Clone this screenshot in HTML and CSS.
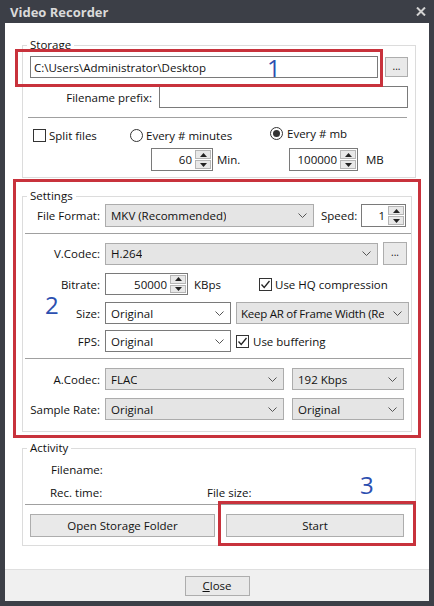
FILE: index.html
```html
<!DOCTYPE html>
<html>
<head>
<meta charset="utf-8">
<title>Video Recorder</title>
<link rel="stylesheet" href="styles.css">
</head>
<body>
<div class="window">
  <div class="titlebar">
    <span class="title">Video Recorder</span>
    <svg class="close-x" width="10" height="9" viewBox="0 0 10 9"><path d="M1 0.5 L9 8.5 M9 0.5 L1 8.5" stroke="#d2d2d2" stroke-width="2"/></svg>
  </div>
  <div class="client">
    <div class="content">
      <fieldset class="group g-storage">
        <legend>Storage</legend>
        <div class="gbody sbody">
          <div class="row r-path">
            <div class="input w348">C:\Users\Administrator\Desktop</div>
            <div class="btn dots w23">...</div>
          </div>
          <div class="row r-prefix">
            <span>Filename prefix:</span>
            <div class="input w249"></div>
          </div>
          <div class="sep s-storage"></div>
          <div class="row r-split">
            <span class="opt o1"><span class="chk"></span>Split files</span>
            <span class="opt o2"><span class="radio"></span>Every # minutes</span>
            <span class="opt o3"><span class="radio on"></span>Every # mb</span>
          </div>
          <div class="row r-spin">
            <span class="cell c-min">
              <span class="spin w62"><span class="sval">60</span><span class="sarr"><span class="sbtn"><svg width="7" height="4" viewBox="0 0 7 4"><path d="M0 4 L3.5 0 L7 4Z" fill="#222"/></svg></span><span class="sbtn"><svg width="7" height="4" viewBox="0 0 7 4"><path d="M0 0 L3.5 4 L7 0Z" fill="#222"/></svg></span></span></span>
              <span class="unit u-min">Min.</span>
            </span>
            <span class="cell">
              <span class="spin w69"><span class="sval">100000</span><span class="sarr"><span class="sbtn"><svg width="7" height="4" viewBox="0 0 7 4"><path d="M0 4 L3.5 0 L7 4Z" fill="#222"/></svg></span><span class="sbtn"><svg width="7" height="4" viewBox="0 0 7 4"><path d="M0 0 L3.5 4 L7 0Z" fill="#222"/></svg></span></span></span>
              <span class="unit u-mb">MB</span>
            </span>
          </div>
        </div>
      </fieldset>

      <fieldset class="group g-settings">
        <legend>Settings</legend>
        <div class="gbody setbody">
          <div class="row r-ff">
            <span class="lab">File Format:</span>
            <div class="combo gray w209 h23"><span class="ctext">MKV (Recommended)</span><svg class="chev" width="9" height="5" viewBox="0 0 9 5"><path d="M0.5 0.5 L4.5 4.5 L8.5 0.5" fill="none" stroke="#555" stroke-width="1"/></svg></div>
            <span class="speed-lbl">Speed:</span>
            <span class="spin w45 h23 speed"><span class="sval">1</span><span class="sarr"><span class="sbtn"><svg width="7" height="4" viewBox="0 0 7 4"><path d="M0 4 L3.5 0 L7 4Z" fill="#222"/></svg></span><span class="sbtn"><svg width="7" height="4" viewBox="0 0 7 4"><path d="M0 0 L3.5 4 L7 0Z" fill="#222"/></svg></span></span></span>
          </div>
          <div class="sep s-set1"></div>
          <div class="row r-vc">
            <span class="lab">V.Codec:</span>
            <div class="combo gray w273"><span class="ctext">H.264</span><svg class="chev" width="9" height="5" viewBox="0 0 9 5"><path d="M0.5 0.5 L4.5 4.5 L8.5 0.5" fill="none" stroke="#555" stroke-width="1"/></svg></div>
            <div class="btn dots w24 h23 ml5">...</div>
          </div>
          <div class="row r-br">
            <span class="lab">Bitrate:</span>
            <span class="cell c-br">
              <span class="spin w83 h22"><span class="sval">50000</span><span class="sarr"><span class="sbtn"><svg width="7" height="4" viewBox="0 0 7 4"><path d="M0 4 L3.5 0 L7 4Z" fill="#222"/></svg></span><span class="sbtn"><svg width="7" height="4" viewBox="0 0 7 4"><path d="M0 0 L3.5 4 L7 0Z" fill="#222"/></svg></span></span></span>
              <span class="unit u-kbps">KBps</span>
            </span>
            <span class="opt"><span class="chk on"><svg width="11" height="11" viewBox="0 0 11 11"><path d="M1.5 5.5 L4.2 8.5 L9.5 2" fill="none" stroke="#222" stroke-width="1.3"/></svg></span>Use HQ compression</span>
          </div>
          <div class="row r-size">
            <span class="lab">Size:</span>
            <div class="combo white w126"><span class="ctext">Original</span><svg class="chev" width="9" height="5" viewBox="0 0 9 5"><path d="M0.5 0.5 L4.5 4.5 L8.5 0.5" fill="none" stroke="#555" stroke-width="1"/></svg></div>
            <div class="combo gray w173 ml5 tight"><span class="ctext">Keep AR of Frame Width (Re</span><svg class="chev" width="9" height="5" viewBox="0 0 9 5"><path d="M0.5 0.5 L4.5 4.5 L8.5 0.5" fill="none" stroke="#555" stroke-width="1"/></svg></div>
          </div>
          <div class="row r-fps">
            <span class="lab">FPS:</span>
            <div class="combo white w126"><span class="ctext">Original</span><svg class="chev" width="9" height="5" viewBox="0 0 9 5"><path d="M0.5 0.5 L4.5 4.5 L8.5 0.5" fill="none" stroke="#555" stroke-width="1"/></svg></div>
            <span class="opt ml5"><span class="chk on"><svg width="11" height="11" viewBox="0 0 11 11"><path d="M1.5 5.5 L4.2 8.5 L9.5 2" fill="none" stroke="#222" stroke-width="1.3"/></svg></span>Use buffering</span>
          </div>
          <div class="sep s-set2"></div>
          <div class="row r-ac">
            <span class="lab">A.Codec:</span>
            <div class="combo gray w179"><span class="ctext">FLAC</span><svg class="chev" width="9" height="5" viewBox="0 0 9 5"><path d="M0.5 0.5 L4.5 4.5 L8.5 0.5" fill="none" stroke="#555" stroke-width="1"/></svg></div>
            <div class="combo gray w112 ml8"><span class="ctext">192 Kbps</span><svg class="chev" width="9" height="5" viewBox="0 0 9 5"><path d="M0.5 0.5 L4.5 4.5 L8.5 0.5" fill="none" stroke="#555" stroke-width="1"/></svg></div>
          </div>
          <div class="row r-sr">
            <span class="lab">Sample Rate:</span>
            <div class="combo gray w179"><span class="ctext">Original</span><svg class="chev" width="9" height="5" viewBox="0 0 9 5"><path d="M0.5 0.5 L4.5 4.5 L8.5 0.5" fill="none" stroke="#555" stroke-width="1"/></svg></div>
            <div class="combo gray w112 ml8"><span class="ctext">Original</span><svg class="chev" width="9" height="5" viewBox="0 0 9 5"><path d="M0.5 0.5 L4.5 4.5 L8.5 0.5" fill="none" stroke="#555" stroke-width="1"/></svg></div>
          </div>
        </div>
      </fieldset>

      <fieldset class="group g-activity">
        <legend>Activity</legend>
        <div class="gbody actbody">
          <div class="row r-fn"><span>Filename:</span></div>
          <div class="row r-rt"><span class="cell c-rt">Rec. time:</span><span>File size:</span></div>
          <div class="sep s-act"></div>
          <div class="row r-btns">
            <div class="btn w185 h23">Open Storage Folder</div>
            <div class="btn w178 h23 ml11">Start</div>
          </div>
        </div>
      </fieldset>
    </div>
    <div class="footer">
      <div class="btn close-btn"><span class="ul">C</span>lose</div>
    </div>
  </div>

  <div class="mark m1"></div>
  <div class="mark m2"></div>
  <div class="mark m3"></div>
  <span class="num n1">1</span>
  <span class="num n2">2</span>
  <span class="num n3">3</span>
</div>
</body>
</html>
```

FILE: styles.css
```css
* { box-sizing: border-box; }
html, body { margin: 0; padding: 0; }
body {
  width: 434px;
  height: 606px;
  overflow: hidden;
  font-family: "Open Sans", "Noto Sans", sans-serif;
  font-size: 11.5px;
  color: #111;
}
.window {
  position: relative;
  width: 434px;
  height: 606px;
  background: #3c3f47;
  display: flex;
  flex-direction: column;
}
.titlebar {
  height: 23px;
  flex: none;
  display: flex;
  align-items: center;
  justify-content: space-between;
  padding: 0 8px 0 10px;
}
.title { color: #dadada; font-weight: 700; font-size: 13px; }
.close-x { display: block; }
.client {
  flex: 1;
  margin: 0 5px 5px;
  background: #fff;
  display: flex;
  flex-direction: column;
}
.content { flex: 1; padding-left: 17px; }

.group {
  margin: 0;
  padding: 0;
  border: 1px solid #dcdcdc;
  min-width: 0;
}
.group legend {
  margin-left: 4px;
  padding: 0 3px;
  line-height: 14px;
  font-size: 11.5px;
}
.g-storage { width: 394px; margin-top: 15px; }
.g-settings { width: 390px; margin-top: 11px; }
.g-activity { width: 394px; margin-top: 9px; }

.row { display: flex; align-items: center; }
.sep { height: 1px; background: #a0a0a0; }

/* storage */
.sbody { padding: 4px 7px 6px 7px; }
.r-path { gap: 7px; }
.r-prefix { margin-top: 8px; justify-content: flex-end; gap: 7px; }
.s-storage { margin: 9px 1px 0 -2px; }
.r-split { margin-top: 9px; height: 16px; }
.opt { display: flex; align-items: center; white-space: nowrap; }
.o1 { width: 97px; margin-left: 3px; }
.o2 { width: 140px; }
.o3 { margin-bottom: 4px; }
.r-spin { margin-top: 5px; }
.c-min { display: flex; align-items: center; width: 138px; margin-left: 121px; }
.cell { display: flex; align-items: center; }
.u-min { margin-left: 4px; }
.u-mb { margin-left: 8px; }

/* controls */
.input {
  height: 22px;
  border: 1px solid #7a7a7a;
  background: #fff;
  padding-left: 3px;
  display: flex;
  align-items: center;
  white-space: nowrap;
  overflow: hidden;
}
.btn {
  height: 20px;
  border: 1px solid #adadad;
  background: #e9e9e9;
  display: flex;
  align-items: center;
  justify-content: center;
  white-space: nowrap;
}
.dots { padding-bottom: 3px; font-size: 10px; }
.chk, .radio {
  width: 13px;
  height: 13px;
  border: 1px solid #333;
  background: #fff;
  margin-right: 3px;
  flex: none;
  display: flex;
  align-items: center;
  justify-content: center;
}
.radio { border-radius: 50%; }
.o3 .radio { margin-right: 4px; }
.radio.on::after {
  content: "";
  width: 7px;
  height: 7px;
  border-radius: 50%;
  background: #333;
}
.chk svg { display: block; }

.spin {
  height: 23px;
  border: 1px solid #7a7a7a;
  background: #fff;
  display: flex;
  align-items: stretch;
  flex: none;
}
.sval { flex: 1; display: flex; align-items: center; justify-content: flex-end; padding-right: 3px; }
.sarr { width: 17px; display: flex; flex-direction: column; justify-content: center; gap: 1px; padding: 1px 1px 1px 0; }
.sbtn {
  flex: 1;
  border: 1px solid #b5b5b5;
  background: #e8e8e8;
  display: flex;
  align-items: center;
  justify-content: center;
}
.sbtn svg { display: block; }

.combo {
  height: 22px;
  display: flex;
  align-items: center;
  justify-content: space-between;
  padding: 0 6px 0 5px;
  flex: none;
  white-space: nowrap;
  overflow: hidden;
}
.combo.gray { background: #e5e5e5; border: 1px solid #acacac; }
.combo.white { background: #fff; border: 1px solid #7a7a7a; }
.combo.tight { padding-left: 4px; letter-spacing: -0.25px; }
.ctext { overflow: hidden; }
.chev { display: block; flex: none; margin-left: 3px; }

/* widths */
.w23 { width: 23px; }
.w24 { width: 24px; }
.w45 { width: 45px; }
.w62 { width: 62px; }
.w69 { width: 69px; }
.w83 { width: 83px; }
.w112 { width: 112px; }
.w126 { width: 126px; }
.w173 { width: 173px; }
.w178 { width: 178px; }
.w179 { width: 179px; }
.w185 { width: 185px; }
.w209 { width: 209px; }
.w249 { width: 249px; }
.w273 { width: 273px; }
.w348 { width: 348px; }
.h22 { height: 22px; }
.h23 { height: 23px; }
.ml5 { margin-left: 5px; }
.ml8 { margin-left: 8px; }
.ml11 { margin-left: 11px; }

/* settings */
.setbody { padding: 1px 0 11px 0; }
.lab { width: 77px; text-align: right; margin-right: 5px; flex: none; }
.speed-lbl { margin-left: 7px; }
.speed { margin-left: auto; margin-right: 5px; }
.s-set1 { margin: 6px 0 0 2px; }
.r-vc { margin-top: 8px; }
.r-br { margin-top: 8px; }
.c-br { width: 154px; }
.u-kbps { margin-left: 6px; }
.r-size { margin-top: 7px; }
.r-fps { margin-top: 6px; }
.r-fps .chk { margin-right: 4px; }
.s-set2 { margin: 6px 0 0 2px; }
.r-ac { margin-top: 9px; }
.r-sr { margin-top: 8px; }

/* activity */
.actbody { padding: 7px 0 8px 0; }
.r-fn { padding-left: 28px; height: 14px; }
.r-rt { padding-left: 27px; height: 14px; margin-top: 9px; }
.c-rt { width: 157px; }
.s-act { margin: 5px 1px 0 2px; }
.r-btns { margin-top: 9px; padding-left: 7px; }

/* footer */
.footer {
  height: 32px;
  flex: none;
  border-top: 1px solid #dfdfdf;
  background: #f0f0f0;
  display: flex;
  align-items: center;
  justify-content: center;
}
.close-btn { width: 65px; height: 20px; }
.ul { text-decoration: underline; }

/* annotations */
.mark {
  position: absolute;
  border: 3px solid #c8323c;
  pointer-events: none;
}
.m1 { left: 15px; top: 49px; width: 368px; height: 38px; }
.m2 { left: 13px; top: 179px; width: 408px; height: 259px; }
.m3 { left: 218px; top: 501px; width: 198px; height: 45px; }
.num {
  position: absolute;
  font-family: "Open Sans", "Noto Sans", sans-serif;
  font-size: 24px;
  line-height: 24px;
  color: #2c4fb0;
}
.n1 { left: 267px; top: 56px; }
.n2 { left: 45px; top: 293px; }
.n3 { left: 360px; top: 473px; }
```
